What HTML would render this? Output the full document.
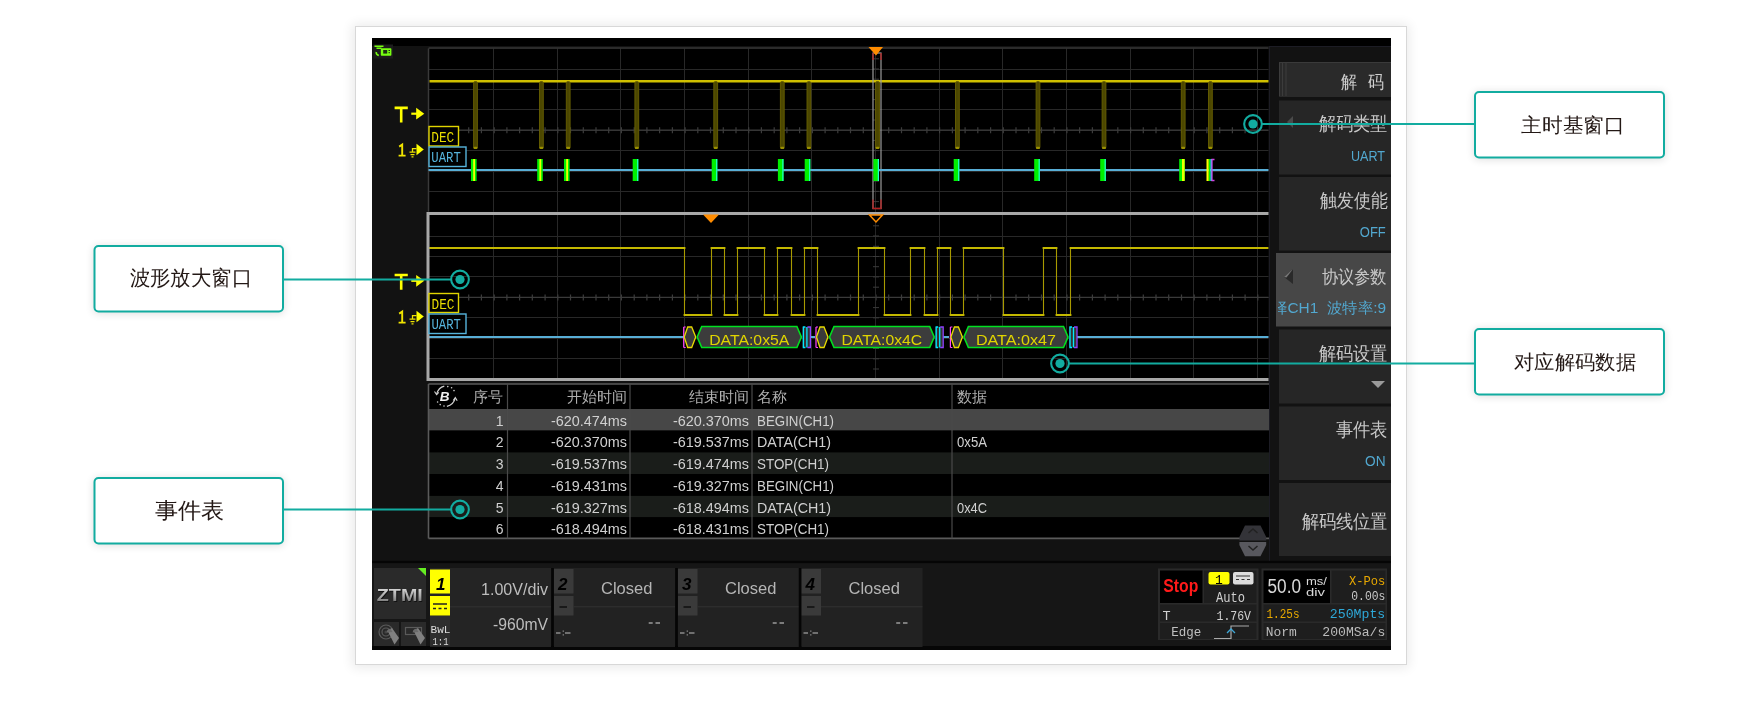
<!DOCTYPE html><html><head><meta charset="utf-8"><style>html,body{margin:0;padding:0;width:1760px;height:710px;overflow:hidden;background:#fff}</style></head><body><svg width="1760" height="710" viewBox="0 0 1760 710" style="position:absolute;left:0;top:0;will-change:transform;font-family:'Liberation Sans',sans-serif">
<defs><filter id="sh" x="-20%" y="-20%" width="140%" height="140%"><feGaussianBlur stdDeviation="6"/></filter><filter id="sh2" x="-10%" y="-10%" width="120%" height="120%"><feGaussianBlur stdDeviation="4"/></filter></defs>
<rect x="0" y="0" width="1760" height="710" fill="#ffffff"/>
<rect x="352" y="24" width="1057" height="644" fill="#000" opacity="0.08" filter="url(#sh)"/>
<rect x="355.5" y="26.5" width="1051" height="638" fill="#fff" stroke="#d8d8d8" stroke-width="1"/>
<rect x="372" y="38" width="1019" height="612" fill="#121212"/>
<rect x="372" y="38" width="1019" height="8" fill="#000"/>
<rect x="373.5" y="44.5" width="19.5" height="14" fill="#1c1c1c"/>
<path d="M374.5 46.2h9M376.5 48.2h5M376.3 52q-0.5 2.5 2.5 3.6" stroke="#77ff11" stroke-width="1.6" fill="none"/>
<rect x="380.8" y="48.2" width="10.6" height="7.6" rx="0.8" fill="#77ff11"/><rect x="383.2" y="50" width="4" height="3.6" fill="#1c3010"/><rect x="388.5" y="50" width="1.5" height="1" fill="#1c3010"/><rect x="388.5" y="52.2" width="1.5" height="1" fill="#1c3010"/>
<rect x="428.5" y="47.1" width="840.0" height="164.70000000000002" fill="#000"/>
<path d="M493.5 48.6V211.8 M557.5 48.6V211.8 M620.5 48.6V211.8 M684.5 48.6V211.8 M748.5 48.6V211.8 M811.5 48.6V211.8 M875.5 48.6V211.8 M939.5 48.6V211.8 M1002.5 48.6V211.8 M1066.5 48.6V211.8 M1130.5 48.6V211.8 M1193.5 48.6V211.8 M1257.5 48.6V211.8 M428.5 69.5H1268.5 M428.5 89.5H1268.5 M428.5 109.5H1268.5 M428.5 130.5H1268.5 M428.5 150.5H1268.5 M428.5 171.5H1268.5 M428.5 191.5H1268.5" stroke="#282828" stroke-width="1" fill="none"/>
<path d="M428.5 48.1H1268.5M428.5 48.6V211.8" stroke="#3a3a3a" stroke-width="1.5" fill="none"/>
<path d="M428.5 130.2H1268.5" stroke="#3a3a3a" stroke-width="1.3"/>
<path d="M456.0 127.20000000000002V133.20000000000002 M468.7 127.20000000000002V133.20000000000002 M481.4 127.20000000000002V133.20000000000002 M494.2 127.20000000000002V133.20000000000002 M506.9 127.20000000000002V133.20000000000002 M519.6 127.20000000000002V133.20000000000002 M532.3 127.20000000000002V133.20000000000002 M545.1 127.20000000000002V133.20000000000002 M557.8 127.20000000000002V133.20000000000002 M570.5 127.20000000000002V133.20000000000002 M583.3 127.20000000000002V133.20000000000002 M596.0 127.20000000000002V133.20000000000002 M608.7 127.20000000000002V133.20000000000002 M621.4 127.20000000000002V133.20000000000002 M634.2 127.20000000000002V133.20000000000002 M646.9 127.20000000000002V133.20000000000002 M659.6 127.20000000000002V133.20000000000002 M672.4 127.20000000000002V133.20000000000002 M685.1 127.20000000000002V133.20000000000002 M697.8 127.20000000000002V133.20000000000002 M710.5 127.20000000000002V133.20000000000002 M723.3 127.20000000000002V133.20000000000002 M736.0 127.20000000000002V133.20000000000002 M748.7 127.20000000000002V133.20000000000002 M761.4 127.20000000000002V133.20000000000002 M774.2 127.20000000000002V133.20000000000002 M786.9 127.20000000000002V133.20000000000002 M799.6 127.20000000000002V133.20000000000002 M812.4 127.20000000000002V133.20000000000002 M825.1 127.20000000000002V133.20000000000002 M837.8 127.20000000000002V133.20000000000002 M850.5 127.20000000000002V133.20000000000002 M863.3 127.20000000000002V133.20000000000002 M876.0 127.20000000000002V133.20000000000002 M888.7 127.20000000000002V133.20000000000002 M901.5 127.20000000000002V133.20000000000002 M914.2 127.20000000000002V133.20000000000002 M926.9 127.20000000000002V133.20000000000002 M939.6 127.20000000000002V133.20000000000002 M952.4 127.20000000000002V133.20000000000002 M965.1 127.20000000000002V133.20000000000002 M977.8 127.20000000000002V133.20000000000002 M990.6 127.20000000000002V133.20000000000002 M1003.3 127.20000000000002V133.20000000000002 M1016.0 127.20000000000002V133.20000000000002 M1028.7 127.20000000000002V133.20000000000002 M1041.5 127.20000000000002V133.20000000000002 M1054.2 127.20000000000002V133.20000000000002 M1066.9 127.20000000000002V133.20000000000002 M1079.6 127.20000000000002V133.20000000000002 M1092.4 127.20000000000002V133.20000000000002 M1105.1 127.20000000000002V133.20000000000002 M1117.8 127.20000000000002V133.20000000000002 M1130.6 127.20000000000002V133.20000000000002 M1143.3 127.20000000000002V133.20000000000002 M1156.0 127.20000000000002V133.20000000000002 M1168.7 127.20000000000002V133.20000000000002 M1181.5 127.20000000000002V133.20000000000002 M1194.2 127.20000000000002V133.20000000000002 M1206.9 127.20000000000002V133.20000000000002 M1219.7 127.20000000000002V133.20000000000002 M1232.4 127.20000000000002V133.20000000000002 M1245.1 127.20000000000002V133.20000000000002 M1257.8 127.20000000000002V133.20000000000002" stroke="#3c3c3c" stroke-width="1.2"/>
<path d="M875.5 48.6V211.8" stroke="#262626" stroke-width="1"/>
<path d="M873 58.8H879 M873 69.0H879 M873 79.2H879 M873 89.4H879 M873 99.6H879 M873 109.8H879 M873 120.0H879 M873 130.2H879 M873 140.4H879 M873 150.6H879 M873 160.8H879 M873 171.0H879 M873 181.2H879 M873 191.4H879 M873 201.6H879" stroke="#3a3a3a" stroke-width="1"/>
<path d="M429.5 81.2H1268.5" stroke="#d0c000" stroke-width="2.4"/>
<rect x="473.6" y="81.5" width="3.8" height="67" rx="1.5" fill="#4c4700" stroke="#686000" stroke-width="0.9"/>
<rect x="473.5" y="146.8" width="4" height="2.2" rx="1" fill="#9a9000"/>
<rect x="539.5" y="81.5" width="3.8" height="67" rx="1.5" fill="#4c4700" stroke="#686000" stroke-width="0.9"/>
<rect x="539.4" y="146.8" width="4" height="2.2" rx="1" fill="#9a9000"/>
<rect x="566.3" y="81.5" width="3.8" height="67" rx="1.5" fill="#4c4700" stroke="#686000" stroke-width="0.9"/>
<rect x="566.2" y="146.8" width="4" height="2.2" rx="1" fill="#9a9000"/>
<rect x="634.9" y="81.5" width="3.8" height="67" rx="1.5" fill="#4c4700" stroke="#686000" stroke-width="0.9"/>
<rect x="634.8" y="146.8" width="4" height="2.2" rx="1" fill="#9a9000"/>
<rect x="713.8" y="81.5" width="3.8" height="67" rx="1.5" fill="#4c4700" stroke="#686000" stroke-width="0.9"/>
<rect x="713.7" y="146.8" width="4" height="2.2" rx="1" fill="#9a9000"/>
<rect x="780.4" y="81.5" width="3.8" height="67" rx="1.5" fill="#4c4700" stroke="#686000" stroke-width="0.9"/>
<rect x="780.3" y="146.8" width="4" height="2.2" rx="1" fill="#9a9000"/>
<rect x="807.0" y="81.5" width="3.8" height="67" rx="1.5" fill="#4c4700" stroke="#686000" stroke-width="0.9"/>
<rect x="806.9" y="146.8" width="4" height="2.2" rx="1" fill="#9a9000"/>
<rect x="875.6" y="81.5" width="3.8" height="67" rx="1.5" fill="#4c4700" stroke="#686000" stroke-width="0.9"/>
<rect x="875.5" y="146.8" width="4" height="2.2" rx="1" fill="#9a9000"/>
<rect x="955.5" y="81.5" width="3.8" height="67" rx="1.5" fill="#4c4700" stroke="#686000" stroke-width="0.9"/>
<rect x="955.4" y="146.8" width="4" height="2.2" rx="1" fill="#9a9000"/>
<rect x="1036.1" y="81.5" width="3.8" height="67" rx="1.5" fill="#4c4700" stroke="#686000" stroke-width="0.9"/>
<rect x="1036.0" y="146.8" width="4" height="2.2" rx="1" fill="#9a9000"/>
<rect x="1102.1" y="81.5" width="3.8" height="67" rx="1.5" fill="#4c4700" stroke="#686000" stroke-width="0.9"/>
<rect x="1102.0" y="146.8" width="4" height="2.2" rx="1" fill="#9a9000"/>
<rect x="1181.3" y="81.5" width="3.8" height="67" rx="1.5" fill="#4c4700" stroke="#686000" stroke-width="0.9"/>
<rect x="1181.2" y="146.8" width="4" height="2.2" rx="1" fill="#9a9000"/>
<rect x="1208.5" y="81.5" width="3.8" height="67" rx="1.5" fill="#4c4700" stroke="#686000" stroke-width="0.9"/>
<rect x="1208.4" y="146.8" width="4" height="2.2" rx="1" fill="#9a9000"/>
<rect x="873" y="53" width="8" height="155.5" fill="none" stroke="#9a9a9a" stroke-width="1.2"/>
<path d="M873 53V60M881 53V60M873 199.5V208.5H881V199.5" stroke="#b22020" stroke-width="1.3" fill="none"/>
<path d="M868.5 47H883L876 55.5Z" fill="#ff8c00"/>
<path d="M428.5 170H1268.5" stroke="#58aed6" stroke-width="2"/>
<rect x="471.0" y="159" width="5.6" height="22" fill="#00f000"/>
<rect x="473.2" y="159" width="1.8" height="22" fill="#f0ff00"/>
<rect x="537.2" y="159" width="5.6" height="22" fill="#00f000"/>
<rect x="539.4" y="159" width="1.8" height="22" fill="#f0ff00"/>
<rect x="564.0" y="159" width="5.6" height="22" fill="#00f000"/>
<rect x="566.2" y="159" width="1.8" height="22" fill="#f0ff00"/>
<rect x="632.7" y="159" width="5.6" height="22" fill="#00f000"/>
<rect x="637.1" y="159" width="1.2" height="22" fill="#20ffd0"/>
<rect x="711.7" y="159" width="5.6" height="22" fill="#00f000"/>
<rect x="716.1" y="159" width="1.2" height="22" fill="#20ffd0"/>
<rect x="777.9" y="159" width="5.6" height="22" fill="#00f000"/>
<rect x="782.3" y="159" width="1.2" height="22" fill="#20ffd0"/>
<rect x="804.7" y="159" width="5.6" height="22" fill="#00f000"/>
<rect x="809.1" y="159" width="1.2" height="22" fill="#20ffd0"/>
<rect x="873.4" y="159" width="5.6" height="22" fill="#00f000"/>
<rect x="877.8" y="159" width="1.2" height="22" fill="#20ffd0"/>
<rect x="953.7" y="159" width="5.6" height="22" fill="#00f000"/>
<rect x="958.1" y="159" width="1.2" height="22" fill="#20ffd0"/>
<rect x="1034.2" y="159" width="5.6" height="22" fill="#00f000"/>
<rect x="1038.6" y="159" width="1.2" height="22" fill="#20ffd0"/>
<rect x="1100.2" y="159" width="5.6" height="22" fill="#00f000"/>
<rect x="1104.6" y="159" width="1.2" height="22" fill="#20ffd0"/>
<rect x="1179.2" y="159" width="5.6" height="22" fill="#00f000"/>
<rect x="1182.0" y="159" width="2.6" height="22" fill="#f0ff00"/>
<rect x="1206.5" y="159" width="2.3" height="22" fill="#ffff00"/><rect x="1208.8" y="159" width="1.6" height="22" fill="#00f000"/><rect x="1210.4" y="159" width="1.6" height="22" fill="#20e8ff"/><path d="M1214.5 159.5h-2.5v21h2.5" stroke="#d040e0" stroke-width="1.3" fill="none"/>
<rect x="429" y="126.5" width="29.5" height="19.5" fill="#000" stroke="#e0d400" stroke-width="1.4"/>
<text x="431.3" y="141.8" font-size="14" fill="#e8dc00" text-anchor="start" font-weight="normal" textLength="23" lengthAdjust="spacingAndGlyphs" font-family="Liberation Mono">DEC</text>
<rect x="429" y="147" width="37" height="19.5" fill="#000" stroke="#56b4dc" stroke-width="1.4"/>
<text x="431.3" y="162" font-size="14" fill="#56b4dc" text-anchor="start" font-weight="normal" textLength="29.5" lengthAdjust="spacingAndGlyphs" font-family="Liberation Mono">UART</text>
<path d="M394.6 107.89999999999999h13.2M401.2 107.89999999999999v14.7" stroke="#ffff00" stroke-width="2.6" fill="none"/>
<path d="M411.3 113.69999999999999h6" stroke="#ffff00" stroke-width="2.2"/><path d="M416.2 107.8L424.3 113.69999999999999L416.2 119.6Z" fill="#ffff00"/>
<path d="M399.2 146.6L402.2 144.6V155.6M398.6 155.6h7" stroke="#f0e400" stroke-width="1.9" fill="none"/>
<path d="M409.5 152.1h6M410.5 154.6h4M411.5 156.9h2M412.5 152.1v-3.5h4" stroke="#f0e400" stroke-width="1.3" fill="none"/>
<path d="M416.5 143.79999999999998L423.8 149.5L416.5 155.2Z" fill="#ffff00"/>
<rect x="428" y="213.5" width="840.5" height="166.0" fill="#000"/>
<path d="M493.5 213.5V379.5 M557.5 213.5V379.5 M620.5 213.5V379.5 M684.5 213.5V379.5 M748.5 213.5V379.5 M811.5 213.5V379.5 M875.5 213.5V379.5 M939.5 213.5V379.5 M1002.5 213.5V379.5 M1066.5 213.5V379.5 M1130.5 213.5V379.5 M1193.5 213.5V379.5 M1257.5 213.5V379.5 M428 236.5H1268.5 M428 256.5H1268.5 M428 276.5H1268.5 M428 297.5H1268.5 M428 317.5H1268.5 M428 338.5H1268.5 M428 358.5H1268.5" stroke="#282828" stroke-width="1" fill="none"/>
<path d="M428 297.4H1268.5" stroke="#3a3a3a" stroke-width="1.3"/>
<path d="M456.0 294.4V300.4 M468.7 294.4V300.4 M481.4 294.4V300.4 M494.2 294.4V300.4 M506.9 294.4V300.4 M519.6 294.4V300.4 M532.3 294.4V300.4 M545.1 294.4V300.4 M557.8 294.4V300.4 M570.5 294.4V300.4 M583.3 294.4V300.4 M596.0 294.4V300.4 M608.7 294.4V300.4 M621.4 294.4V300.4 M634.2 294.4V300.4 M646.9 294.4V300.4 M659.6 294.4V300.4 M672.4 294.4V300.4 M685.1 294.4V300.4 M697.8 294.4V300.4 M710.5 294.4V300.4 M723.3 294.4V300.4 M736.0 294.4V300.4 M748.7 294.4V300.4 M761.4 294.4V300.4 M774.2 294.4V300.4 M786.9 294.4V300.4 M799.6 294.4V300.4 M812.4 294.4V300.4 M825.1 294.4V300.4 M837.8 294.4V300.4 M850.5 294.4V300.4 M863.3 294.4V300.4 M876.0 294.4V300.4 M888.7 294.4V300.4 M901.5 294.4V300.4 M914.2 294.4V300.4 M926.9 294.4V300.4 M939.6 294.4V300.4 M952.4 294.4V300.4 M965.1 294.4V300.4 M977.8 294.4V300.4 M990.6 294.4V300.4 M1003.3 294.4V300.4 M1016.0 294.4V300.4 M1028.7 294.4V300.4 M1041.5 294.4V300.4 M1054.2 294.4V300.4 M1066.9 294.4V300.4 M1079.6 294.4V300.4 M1092.4 294.4V300.4 M1105.1 294.4V300.4 M1117.8 294.4V300.4 M1130.6 294.4V300.4 M1143.3 294.4V300.4 M1156.0 294.4V300.4 M1168.7 294.4V300.4 M1181.5 294.4V300.4 M1194.2 294.4V300.4 M1206.9 294.4V300.4 M1219.7 294.4V300.4 M1232.4 294.4V300.4 M1245.1 294.4V300.4 M1257.8 294.4V300.4" stroke="#3c3c3c" stroke-width="1.2"/>
<path d="M875.5 213.5V379.5" stroke="#262626" stroke-width="1"/>
<path d="M873 225.8H879 M873 236.0H879 M873 246.3H879 M873 256.5H879 M873 266.7H879 M873 276.9H879 M873 287.2H879 M873 297.4H879 M873 307.6H879 M873 317.8H879 M873 328.1H879 M873 338.3H879 M873 348.5H879 M873 358.8H879 M873 369.0H879" stroke="#3a3a3a" stroke-width="1"/>
<path d="M684.5 248V315 M711.5 248V315 M724.5 248V315 M737.5 248V315 M764.5 248V315 M777.5 248V315 M791.5 248V315 M804.5 248V315 M817.5 248V315 M858.5 248V315 M884.5 248V315 M910.5 248V315 M924.5 248V315 M937.5 248V315 M950.5 248V315 M963.5 248V315 M1003.5 248V315 M1043.5 248V315 M1056.5 248V315 M1070.5 248V315" stroke="#a89a00" stroke-width="1.1" fill="none"/>
<path d="M430 248H684.5 M684.5 315H711.5 M711.5 248H724.5 M724.5 315H737.5 M737.5 248H764.5 M764.5 315H777.5 M777.5 248H791.5 M791.5 315H804.5 M804.5 248H817.5 M817.5 315H858.5 M858.5 248H884.5 M884.5 315H910.5 M910.5 248H924.5 M924.5 315H937.5 M937.5 248H950.5 M950.5 315H963.5 M963.5 248H1003.5 M1003.5 315H1043.5 M1043.5 248H1056.5 M1056.5 315H1070.5 M1070.5 248H1267.5" stroke="#c4b800" stroke-width="1.8" fill="none" stroke-linecap="square"/>
<path d="M428 337H684M1077 337H1268.5" stroke="#58aed6" stroke-width="2"/>
<path d="M811 337H815M943 337H949" stroke="#58aed6" stroke-width="2"/>
<path d="M683.7 327H685.7M683.7 327V347.5M683.7 347.5H685.7" stroke="#ff44ff" stroke-width="1.2" fill="none"/>
<path d="M684.2 337L687.7 327H691.7L695.7 337L691.7 347.5H687.7Z" fill="#3a3a3a" stroke="#e8dc00" stroke-width="1.3"/>
<path d="M697.2 337L701.7 326.5H796.9L801.4 337L796.9 347.5H701.7Z" fill="#3c3c3c" stroke="#00e020" stroke-width="1.6"/>
<text x="749.3" y="345" font-size="15.5" fill="#e0d400" text-anchor="middle" font-weight="normal" textLength="80.2" lengthAdjust="spacingAndGlyphs" >DATA:0x5A</text>
<rect x="802.4" y="327" width="8" height="20.5" fill="#333"/>
<path d="M805.4 327H803.4V347.5H805.4M806.9 327V347.5" stroke="#00e8ff" stroke-width="1.3" fill="none"/>
<path d="M807.4 327H810.4V347.5H807.4" stroke="#9040ff" stroke-width="1.3" fill="none"/>
<path d="M816 327H818M816 327V347.5M816 347.5H818" stroke="#ff44ff" stroke-width="1.2" fill="none"/>
<path d="M816.5 337L820 327H824L828 337L824 347.5H820Z" fill="#3a3a3a" stroke="#e8dc00" stroke-width="1.3"/>
<path d="M829.5 337L834.0 326.5H929.7L934.2 337L929.7 347.5H834.0Z" fill="#3c3c3c" stroke="#00e020" stroke-width="1.6"/>
<text x="881.85" y="345" font-size="15.5" fill="#e0d400" text-anchor="middle" font-weight="normal" textLength="80.7" lengthAdjust="spacingAndGlyphs" >DATA:0x4C</text>
<rect x="935.2" y="327" width="8" height="20.5" fill="#333"/>
<path d="M938.2 327H936.2V347.5H938.2M939.7 327V347.5" stroke="#00e8ff" stroke-width="1.3" fill="none"/>
<path d="M940.2 327H943.2V347.5H940.2" stroke="#9040ff" stroke-width="1.3" fill="none"/>
<path d="M950.4 327H952.4M950.4 327V347.5M950.4 347.5H952.4" stroke="#ff44ff" stroke-width="1.2" fill="none"/>
<path d="M950.9 337L954.4 327H958.4L962.4 337L958.4 347.5H954.4Z" fill="#3a3a3a" stroke="#e8dc00" stroke-width="1.3"/>
<path d="M963.9 337L968.4 326.5H1063.5L1068 337L1063.5 347.5H968.4Z" fill="#3c3c3c" stroke="#00e020" stroke-width="1.6"/>
<text x="1015.95" y="345" font-size="15.5" fill="#e0d400" text-anchor="middle" font-weight="normal" textLength="80.1" lengthAdjust="spacingAndGlyphs" >DATA:0x47</text>
<rect x="1069" y="327" width="8" height="20.5" fill="#333"/>
<path d="M1072 327H1070V347.5H1072M1073.5 327V347.5" stroke="#00e8ff" stroke-width="1.3" fill="none"/>
<path d="M1074 327H1077V347.5H1074" stroke="#9040ff" stroke-width="1.3" fill="none"/>
<path d="M1268.5 213.5H428V379.5H1268.5" fill="none" stroke="#a8a8a8" stroke-width="3"/>
<path d="M703 214.5H719L711 223Z" fill="#ff8c00"/>
<path d="M869.5 215H882.5L876 222Z" fill="#000" stroke="#ff8c00" stroke-width="1.5"/>
<rect x="429" y="293.5" width="29.5" height="19" fill="#000" stroke="#e0d400" stroke-width="1.4"/>
<text x="431.5" y="308.7" font-size="14" fill="#e8dc00" text-anchor="start" font-weight="normal" textLength="23" lengthAdjust="spacingAndGlyphs" font-family="Liberation Mono">DEC</text>
<rect x="429" y="314" width="37" height="19.5" fill="#000" stroke="#56b4dc" stroke-width="1.4"/>
<text x="431.5" y="329" font-size="14" fill="#56b4dc" text-anchor="start" font-weight="normal" textLength="29.5" lengthAdjust="spacingAndGlyphs" font-family="Liberation Mono">UART</text>
<path d="M394.6 275.0h13.2M401.2 275.0v14.7" stroke="#ffff00" stroke-width="2.6" fill="none"/>
<path d="M411.3 280.8h6" stroke="#ffff00" stroke-width="2.2"/><path d="M416.2 274.9L424.3 280.8L416.2 286.7Z" fill="#ffff00"/>
<path d="M399.2 313.6L402.2 311.6V322.6M398.6 322.6h7" stroke="#f0e400" stroke-width="1.9" fill="none"/>
<path d="M409.5 319.1h6M410.5 321.6h4M411.5 323.90000000000003h2M412.5 319.1v-3.5h4" stroke="#f0e400" stroke-width="1.3" fill="none"/>
<path d="M416.5 310.8L423.8 316.5L416.5 322.20000000000005Z" fill="#ffff00"/>
<rect x="428.5" y="384" width="840.5" height="154.39999999999998" fill="#000"/>
<rect x="428.5" y="409" width="840.5" height="21.600000000000023" fill="#474747"/>
<rect x="428.5" y="430.6" width="840.5" height="21.799999999999955" fill="#000"/>
<rect x="428.5" y="452.4" width="840.5" height="21.80000000000001" fill="#1a1d1a"/>
<rect x="428.5" y="474.2" width="840.5" height="21.69999999999999" fill="#000"/>
<rect x="428.5" y="495.9" width="840.5" height="21.399999999999977" fill="#1a1d1a"/>
<rect x="428.5" y="517.3" width="840.5" height="21.100000000000023" fill="#000"/>
<path d="M428.5 384H1269M428.5 384V538.4M428.5 538.4H1269" stroke="#5a5a5a" stroke-width="1.6" fill="none"/>
<path d="M507.5 384V538.4 M630 384V538.4 M752 384V538.4 M952 384V538.4" stroke="#4a4a4a" stroke-width="1.2"/>
<text x="503" y="402" font-size="15" fill="#b0b0b0" text-anchor="end" font-weight="normal" >序号</text>
<text x="627" y="402" font-size="15" fill="#b0b0b0" text-anchor="end" font-weight="normal" >开始时间</text>
<text x="749" y="402" font-size="15" fill="#b0b0b0" text-anchor="end" font-weight="normal" >结束时间</text>
<text x="757" y="402" font-size="15" fill="#b0b0b0" text-anchor="start" font-weight="normal" >名称</text>
<text x="957" y="402" font-size="15" fill="#b0b0b0" text-anchor="start" font-weight="normal" >数据</text>
<path d="M444.3 386.2Q438.5 387.5 436.6 394.3M446.9 406.3Q453.5 405 455.2 398.2" stroke="#cfcfcf" stroke-width="1.3" fill="none"/>
<path d="M434.5 391.5L436.6 394.6L438.8 392.3M453.2 400.5L455.3 397.6L457.2 400.8" stroke="#cfcfcf" stroke-width="1.1" fill="none"/>
<g fill="#cfcfcf"><circle cx="447.8" cy="386.6" r="0.8"/><circle cx="451.6" cy="387.7" r="0.8"/><circle cx="454" cy="390.6" r="0.8"/><circle cx="437.6" cy="402" r="0.8"/><circle cx="440.2" cy="404.6" r="0.8"/><circle cx="444" cy="406" r="0.8"/></g>
<text x="439.8" y="401.3" font-size="13.5" fill="#f0f0f0" text-anchor="start" font-weight="bold" font-style="italic">B</text>
<text x="503.5" y="425.7" font-size="14" fill="#d0d0d0" text-anchor="end" font-weight="normal" >1</text>
<text x="627" y="425.7" font-size="14" fill="#d0d0d0" text-anchor="end" font-weight="normal" textLength="76" lengthAdjust="spacingAndGlyphs" >-620.474ms</text>
<text x="749" y="425.7" font-size="14" fill="#d0d0d0" text-anchor="end" font-weight="normal" textLength="76" lengthAdjust="spacingAndGlyphs" >-620.370ms</text>
<text x="757" y="425.7" font-size="14" fill="#d0d0d0" text-anchor="start" font-weight="normal" textLength="77" lengthAdjust="spacingAndGlyphs" >BEGIN(CH1)</text>
<text x="503.5" y="447.3" font-size="14" fill="#d0d0d0" text-anchor="end" font-weight="normal" >2</text>
<text x="627" y="447.3" font-size="14" fill="#d0d0d0" text-anchor="end" font-weight="normal" textLength="76" lengthAdjust="spacingAndGlyphs" >-620.370ms</text>
<text x="749" y="447.3" font-size="14" fill="#d0d0d0" text-anchor="end" font-weight="normal" textLength="76" lengthAdjust="spacingAndGlyphs" >-619.537ms</text>
<text x="757" y="447.3" font-size="14" fill="#d0d0d0" text-anchor="start" font-weight="normal" textLength="74" lengthAdjust="spacingAndGlyphs" >DATA(CH1)</text>
<text x="957" y="447.3" font-size="14" fill="#d0d0d0" text-anchor="start" font-weight="normal" textLength="30" lengthAdjust="spacingAndGlyphs" >0x5A</text>
<text x="503.5" y="469.09999999999997" font-size="14" fill="#d0d0d0" text-anchor="end" font-weight="normal" >3</text>
<text x="627" y="469.09999999999997" font-size="14" fill="#d0d0d0" text-anchor="end" font-weight="normal" textLength="76" lengthAdjust="spacingAndGlyphs" >-619.537ms</text>
<text x="749" y="469.09999999999997" font-size="14" fill="#d0d0d0" text-anchor="end" font-weight="normal" textLength="76" lengthAdjust="spacingAndGlyphs" >-619.474ms</text>
<text x="757" y="469.09999999999997" font-size="14" fill="#d0d0d0" text-anchor="start" font-weight="normal" textLength="72" lengthAdjust="spacingAndGlyphs" >STOP(CH1)</text>
<text x="503.5" y="490.9" font-size="14" fill="#d0d0d0" text-anchor="end" font-weight="normal" >4</text>
<text x="627" y="490.9" font-size="14" fill="#d0d0d0" text-anchor="end" font-weight="normal" textLength="76" lengthAdjust="spacingAndGlyphs" >-619.431ms</text>
<text x="749" y="490.9" font-size="14" fill="#d0d0d0" text-anchor="end" font-weight="normal" textLength="76" lengthAdjust="spacingAndGlyphs" >-619.327ms</text>
<text x="757" y="490.9" font-size="14" fill="#d0d0d0" text-anchor="start" font-weight="normal" textLength="77" lengthAdjust="spacingAndGlyphs" >BEGIN(CH1)</text>
<text x="503.5" y="512.6" font-size="14" fill="#d0d0d0" text-anchor="end" font-weight="normal" >5</text>
<text x="627" y="512.6" font-size="14" fill="#d0d0d0" text-anchor="end" font-weight="normal" textLength="76" lengthAdjust="spacingAndGlyphs" >-619.327ms</text>
<text x="749" y="512.6" font-size="14" fill="#d0d0d0" text-anchor="end" font-weight="normal" textLength="76" lengthAdjust="spacingAndGlyphs" >-618.494ms</text>
<text x="757" y="512.6" font-size="14" fill="#d0d0d0" text-anchor="start" font-weight="normal" textLength="74" lengthAdjust="spacingAndGlyphs" >DATA(CH1)</text>
<text x="957" y="512.6" font-size="14" fill="#d0d0d0" text-anchor="start" font-weight="normal" textLength="30" lengthAdjust="spacingAndGlyphs" >0x4C</text>
<text x="503.5" y="534.0" font-size="14" fill="#d0d0d0" text-anchor="end" font-weight="normal" >6</text>
<text x="627" y="534.0" font-size="14" fill="#d0d0d0" text-anchor="end" font-weight="normal" textLength="76" lengthAdjust="spacingAndGlyphs" >-618.494ms</text>
<text x="749" y="534.0" font-size="14" fill="#d0d0d0" text-anchor="end" font-weight="normal" textLength="76" lengthAdjust="spacingAndGlyphs" >-618.431ms</text>
<text x="757" y="534.0" font-size="14" fill="#d0d0d0" text-anchor="start" font-weight="normal" textLength="72" lengthAdjust="spacingAndGlyphs" >STOP(CH1)</text>
<path d="M1245 525.5H1260.5L1266.2 537V540.5H1239.4V537Z" fill="#333338"/>
<path d="M1239.4 542H1266.2V545L1260.5 556.3H1245L1239.4 545Z" fill="#58585e"/>
<path d="M1248.5 533l4.5 -4 4.5 4M1248.5 546l4.5 4 4.5 -4" stroke="#222" stroke-width="1.5" fill="none"/>
<rect x="1269" y="46" width="122" height="515" fill="#121212"/>
<path d="M1269.5 47V561M1269 46.5H1391" stroke="#1c1c24" stroke-width="1"/>
<rect x="1279" y="62" width="112" height="35" fill="#2a2a2a"/>
<path d="M1279.5 63V96M1282.5 63V96M1286 63V96" stroke="#3c3c3c" stroke-width="1"/>
<path d="M1279 62.5H1391" stroke="#3a3a3a" stroke-width="1"/>
<text transform="translate(1384.5,87.8) scale(1,1.12)" x="0" y="0" font-size="16.5" fill="#cfcfcf" text-anchor="end" font-weight="normal" >解&#160;&#160;码</text>
<rect x="1279" y="100.5" width="112" height="74.0" fill="#262626"/>
<path d="M1293 116L1287 122L1293 128Z" fill="#4a4a4a"/>
<text transform="translate(1387.5,130.2) scale(1,1.1)" x="0" y="0" font-size="17" fill="#c8c8c8" text-anchor="end" font-weight="normal" >解码类型</text>
<text x="1385" y="161" font-size="14" fill="#52a8d0" text-anchor="end" font-weight="normal" textLength="34" lengthAdjust="spacingAndGlyphs" >UART</text>
<rect x="1279" y="177" width="112" height="73.5" fill="#262626"/>
<text transform="translate(1387.5,206.6) scale(1,1.12)" x="0" y="0" font-size="17" fill="#c8c8c8" text-anchor="end" font-weight="normal" >触发使能</text>
<text x="1385.8" y="236.7" font-size="14" fill="#52a8d0" text-anchor="end" font-weight="normal" textLength="26" lengthAdjust="spacingAndGlyphs" >OFF</text>
<rect x="1276" y="253" width="115" height="73.5" fill="#474747"/>
<path d="M1293 269L1284 277L1293 284Z" fill="#2a2a2a"/><path d="M1293 269L1284 277L1286.5 277.5Z" fill="#777"/>
<text transform="translate(1386.5,283) scale(1,1.1)" x="0" y="0" font-size="16.6" fill="#c8c8c8" text-anchor="end" font-weight="normal" >协议参数</text>
<clipPath id="c4"><rect x="1278" y="253" width="113" height="73"/></clipPath><g clip-path="url(#c4)">
<text x="1272" y="313" font-size="15" fill="#52a8d0" text-anchor="start" font-weight="normal" textLength="114" lengthAdjust="spacingAndGlyphs" >择CH1&#160;&#160;波特率:9</text>
</g>
<rect x="1279" y="329.5" width="112" height="74.0" fill="#262626"/>
<text transform="translate(1387.5,359.5) scale(1,1.1)" x="0" y="0" font-size="17" fill="#c8c8c8" text-anchor="end" font-weight="normal" >解码设置</text>
<path d="M1371 381H1385L1378 388Z" fill="#9a9a9a"/>
<rect x="1279" y="406.5" width="112" height="73.5" fill="#262626"/>
<text transform="translate(1387.5,436) scale(1,1.1)" x="0" y="0" font-size="17" fill="#c8c8c8" text-anchor="end" font-weight="normal" >事件表</text>
<text x="1385.5" y="466" font-size="14" fill="#52a8d0" text-anchor="end" font-weight="normal" textLength="20.5" lengthAdjust="spacingAndGlyphs" >ON</text>
<rect x="1279" y="483" width="112" height="73" fill="#262626"/>
<text transform="translate(1387.5,527.7) scale(1,1.1)" x="0" y="0" font-size="17" fill="#c8c8c8" text-anchor="end" font-weight="normal" >解码线位置</text>
<rect x="372" y="560.8" width="1019" height="2.4" fill="#050505"/>
<rect x="372" y="563.2" width="1019" height="86.8" fill="#161616"/>
<rect x="372" y="646" width="1019" height="4" fill="#060606"/>
<rect x="374" y="568" width="52" height="51" fill="#2a2a2a"/>
<path d="M418 568H426V576Z" fill="#66ee22"/>
<linearGradient id="zg" x1="0" y1="0" x2="0" y2="1"><stop offset="0" stop-color="#e0e0e0"/><stop offset="0.55" stop-color="#a8a8a8"/><stop offset="1" stop-color="#6a6a6a"/></linearGradient>
<text x="377.6" y="601.6" font-size="16" fill="#111" text-anchor="start" font-weight="bold" textLength="46" lengthAdjust="spacingAndGlyphs" >ZTMI</text>
<text x="376.8" y="600.8" font-size="16" fill="url(#zg)" text-anchor="start" font-weight="bold" textLength="46" lengthAdjust="spacingAndGlyphs" >ZTMI</text>
<rect x="374" y="622" width="25" height="24" fill="#2a2a2a"/><rect x="401" y="622" width="25" height="24" fill="#2a2a2a"/>
<circle cx="386" cy="632" r="7" stroke="#5a5a5a" stroke-width="1.2" fill="none"/><circle cx="386" cy="632" r="4" stroke="#5a5a5a" stroke-width="1.2" fill="none"/><circle cx="386" cy="632" r="1.6" fill="#444"/>
<path d="M387.5 630.5L392 628L399 638L394.5 644.5Z" fill="#808080"/><path d="M386.6 632.6Q387 629 390.5 628.8L392.6 632Z" fill="#6a6a6a"/>
<rect x="405.5" y="627.5" width="16" height="7" stroke="#5a5a5a" stroke-width="1.2" fill="none"/>
<path d="M413.5 630.5L418 628L425 638L420.5 644.5Z" fill="#808080"/><path d="M412.6 632.6Q413 629 416.5 628.8L418.6 632Z" fill="#6a6a6a"/>
<rect x="430" y="568" width="121" height="79" fill="#242424"/>
<rect x="430" y="569.5" width="20" height="24" fill="#ffff00"/>
<text x="436" y="590" font-size="17" fill="#000" text-anchor="start" font-weight="bold" font-style="italic">1</text>
<rect x="430" y="596" width="20" height="19.5" fill="#ffff00"/>
<path d="M433 604h14M433 608.5h3M438.5 608.5h3M444 608.5h3" stroke="#222" stroke-width="1.5"/>
<rect x="430" y="616" width="20" height="30" fill="#2e2e2e"/>
<text x="430.5" y="633" font-size="11" fill="#ddd" text-anchor="start" font-weight="normal" textLength="20" lengthAdjust="spacingAndGlyphs" font-family="Liberation Mono">BwL</text>
<text x="432.5" y="644.5" font-size="11" fill="#ddd" text-anchor="start" font-weight="normal" textLength="16" lengthAdjust="spacingAndGlyphs" font-family="Liberation Mono">1:1</text>
<path d="M450 606.8H551" stroke="#333" stroke-width="1"/>
<text x="548" y="594.5" font-size="17" fill="#bdbdbd" text-anchor="end" font-weight="normal" textLength="67" lengthAdjust="spacingAndGlyphs" >1.00V/div</text>
<text x="548" y="629.5" font-size="17" fill="#bdbdbd" text-anchor="end" font-weight="normal" textLength="55" lengthAdjust="spacingAndGlyphs" >-960mV</text>
<rect x="554" y="568" width="121" height="79" fill="#222222"/>
<rect x="554" y="569" width="19.5" height="24.5" fill="#3a3a3a"/>
<text x="558" y="590" font-size="17" fill="#000" text-anchor="start" font-weight="bold" font-style="italic">2</text>
<rect x="554" y="596" width="19.5" height="19.5" fill="#3a3a3a"/>
<path d="M559.5 607H567" stroke="#111" stroke-width="1.6"/>
<path d="M573.5 606.8H675" stroke="#333" stroke-width="1"/>
<text x="626.7" y="594" font-size="17" fill="#b5b5b5" text-anchor="middle" font-weight="normal" textLength="51.5" lengthAdjust="spacingAndGlyphs" >Closed</text>
<path d="M648.7 623h4M655.5 623h4.5" stroke="#9a9a9a" stroke-width="1.4"/>
<path d="M556 633h4.5M565 633h5.5M563.3 630.5v1.3M563.3 634.3v1.3" stroke="#8a8a8a" stroke-width="1.3"/>
<rect x="678" y="568" width="121" height="79" fill="#222222"/>
<rect x="678" y="569" width="19.5" height="24.5" fill="#3a3a3a"/>
<text x="682" y="590" font-size="17" fill="#000" text-anchor="start" font-weight="bold" font-style="italic">3</text>
<rect x="678" y="596" width="19.5" height="19.5" fill="#3a3a3a"/>
<path d="M683.5 607H691" stroke="#111" stroke-width="1.6"/>
<path d="M697.5 606.8H799" stroke="#333" stroke-width="1"/>
<text x="750.7" y="594" font-size="17" fill="#b5b5b5" text-anchor="middle" font-weight="normal" textLength="51.5" lengthAdjust="spacingAndGlyphs" >Closed</text>
<path d="M772.7 623h4M779.5 623h4.5" stroke="#9a9a9a" stroke-width="1.4"/>
<path d="M680 633h4.5M689 633h5.5M687.3 630.5v1.3M687.3 634.3v1.3" stroke="#8a8a8a" stroke-width="1.3"/>
<rect x="801.5" y="568" width="121" height="79" fill="#222222"/>
<rect x="801.5" y="569" width="19.5" height="24.5" fill="#3a3a3a"/>
<text x="805.5" y="590" font-size="17" fill="#000" text-anchor="start" font-weight="bold" font-style="italic">4</text>
<rect x="801.5" y="596" width="19.5" height="19.5" fill="#3a3a3a"/>
<path d="M807.0 607H814.5" stroke="#111" stroke-width="1.6"/>
<path d="M821.0 606.8H922.5" stroke="#333" stroke-width="1"/>
<text x="874.2" y="594" font-size="17" fill="#b5b5b5" text-anchor="middle" font-weight="normal" textLength="51.5" lengthAdjust="spacingAndGlyphs" >Closed</text>
<path d="M896.2 623h4M903.0 623h4.5" stroke="#9a9a9a" stroke-width="1.4"/>
<path d="M803.5 633h4.5M812.5 633h5.5M810.8 630.5v1.3M810.8 634.3v1.3" stroke="#8a8a8a" stroke-width="1.3"/>
<path d="M552.5 568V647M676.5 568V647M800 568V647" stroke="#050505" stroke-width="2.5"/>
<rect x="1158" y="568.5" width="100.5" height="71.5" fill="#2a2a2a"/>
<rect x="1160" y="570.5" width="42.5" height="32.5" fill="#000"/>
<rect x="1204" y="570.5" width="52.5" height="32.5" fill="#1e1e1e"/>
<text x="1180.8" y="592.3" font-size="18" fill="#ff1a1a" text-anchor="middle" font-weight="bold" textLength="35" lengthAdjust="spacingAndGlyphs" >Stop</text>
<rect x="1208.5" y="572" width="21" height="12.5" rx="2" fill="#ffff00"/>
<text x="1219" y="583.5" font-size="13" fill="#000" text-anchor="middle" font-weight="normal" font-family="Liberation Mono">1</text>
<rect x="1233" y="572" width="20.5" height="12.5" rx="2" fill="#dddddd"/>
<path d="M1236 576h14M1236 579.5h3M1241.5 579.5h3M1247 579.5h3" stroke="#333" stroke-width="1.2"/>
<text x="1230.5" y="601.8" font-size="14" fill="#cfcfcf" text-anchor="middle" font-weight="normal" textLength="29" lengthAdjust="spacingAndGlyphs" font-family="Liberation Mono">Auto</text>
<rect x="1160" y="604.5" width="96.5" height="17" fill="#1e1e1e"/>
<text x="1162.5" y="619.6" font-size="13.5" fill="#cfcfcf" text-anchor="start" font-weight="normal" font-family="Liberation Mono">T</text>
<text x="1251" y="619.8" font-size="13.5" fill="#cfcfcf" text-anchor="end" font-weight="normal" textLength="34.5" lengthAdjust="spacingAndGlyphs" font-family="Liberation Mono">1.76V</text>
<rect x="1160" y="623" width="96.5" height="16" fill="#1e1e1e"/>
<text x="1171.3" y="636" font-size="13.5" fill="#c0c0c0" text-anchor="start" font-weight="normal" textLength="30" lengthAdjust="spacingAndGlyphs" font-family="Liberation Mono">Edge</text>
<path d="M1214 638.5H1231V626H1249" stroke="#aaa" stroke-width="1.2" fill="none"/><path d="M1227 633l4 -4 4 4" stroke="#3fa8d8" stroke-width="1.3" fill="none"/>
<rect x="1261.5" y="568.5" width="125.5" height="71.5" fill="#2a2a2a"/>
<rect x="1263.5" y="570.5" width="66.5" height="32.5" fill="#000"/>
<rect x="1331.5" y="570.5" width="54" height="32.5" fill="#1e1e1e"/>
<text x="1267.5" y="592.5" font-size="20" fill="#d8d8d8" text-anchor="start" font-weight="normal" textLength="33.5" lengthAdjust="spacingAndGlyphs" >50.0</text>
<text x="1306" y="584.5" font-size="11" fill="#d8d8d8" text-anchor="start" font-weight="normal" textLength="21" lengthAdjust="spacingAndGlyphs" >ms/</text>
<text x="1306" y="596" font-size="11" fill="#d8d8d8" text-anchor="start" font-weight="normal" textLength="19" lengthAdjust="spacingAndGlyphs" >div</text>
<text x="1385.2" y="585.3" font-size="12.5" fill="#e8a800" text-anchor="end" font-weight="normal" textLength="36.3" lengthAdjust="spacingAndGlyphs" font-family="Liberation Mono">X-Pos</text>
<text x="1385.3" y="600.3" font-size="13" fill="#c8c8c8" text-anchor="end" font-weight="normal" textLength="34" lengthAdjust="spacingAndGlyphs" font-family="Liberation Mono">0.00s</text>
<rect x="1263.5" y="604.5" width="122" height="17" fill="#1e1e1e"/>
<text x="1266.5" y="618.3" font-size="13.5" fill="#e8a800" text-anchor="start" font-weight="normal" textLength="33" lengthAdjust="spacingAndGlyphs" font-family="Liberation Mono">1.25s</text>
<text x="1385.3" y="618.3" font-size="13.5" fill="#2ea8d8" text-anchor="end" font-weight="normal" textLength="55.5" lengthAdjust="spacingAndGlyphs" font-family="Liberation Mono">250Mpts</text>
<rect x="1263.5" y="623" width="122" height="16" fill="#1e1e1e"/>
<text x="1265.8" y="636" font-size="13" fill="#bcbcbc" text-anchor="start" font-weight="normal" textLength="31" lengthAdjust="spacingAndGlyphs" font-family="Liberation Mono">Norm</text>
<text x="1385.3" y="636" font-size="13" fill="#bcbcbc" text-anchor="end" font-weight="normal" textLength="63" lengthAdjust="spacingAndGlyphs" font-family="Liberation Mono">200MSa/s</text>
<rect x="93.5" y="246" width="190.5" height="67.5" rx="4" fill="#000" opacity="0.13" filter="url(#sh2)"/>
<rect x="94.5" y="246" width="188.5" height="65.5" rx="4" fill="#fff" stroke="#12aca0" stroke-width="2"/>
<text x="129.5" y="284.8" font-size="20.6" fill="#231815" text-anchor="start" font-weight="normal" textLength="122.5" lengthAdjust="spacingAndGlyphs" >波形放大窗口</text>
<path d="M283 279.5H451" stroke="#12aca0" stroke-width="2"/>
<circle cx="460" cy="279.5" r="8.85" fill="none" stroke="#12aca0" stroke-width="2.1"/><circle cx="460" cy="279.5" r="4.6" fill="#12aca0"/>
<rect x="93.5" y="478" width="190.5" height="67.5" rx="4" fill="#000" opacity="0.13" filter="url(#sh2)"/>
<rect x="94.5" y="478" width="188.5" height="65.5" rx="4" fill="#fff" stroke="#12aca0" stroke-width="2"/>
<text x="155" y="518" font-size="21.5" fill="#231815" text-anchor="start" font-weight="normal" textLength="69.5" lengthAdjust="spacingAndGlyphs" >事件表</text>
<path d="M283 509.5H451" stroke="#12aca0" stroke-width="2"/>
<circle cx="460" cy="509.5" r="8.85" fill="none" stroke="#12aca0" stroke-width="2.1"/><circle cx="460" cy="509.5" r="4.6" fill="#12aca0"/>
<rect x="1474" y="92" width="191" height="67.5" rx="4" fill="#000" opacity="0.13" filter="url(#sh2)"/>
<rect x="1475" y="92" width="189" height="65.5" rx="4" fill="#fff" stroke="#12aca0" stroke-width="2"/>
<text x="1521.3" y="132.3" font-size="20.4" fill="#231815" text-anchor="start" font-weight="normal" textLength="103.5" lengthAdjust="spacingAndGlyphs" >主时基窗口</text>
<path d="M1262 124H1475" stroke="#12aca0" stroke-width="2"/>
<circle cx="1253" cy="124" r="8.85" fill="none" stroke="#12aca0" stroke-width="2.1"/><circle cx="1253" cy="124" r="4.6" fill="#12aca0"/>
<rect x="1474" y="329" width="191" height="67.5" rx="4" fill="#000" opacity="0.13" filter="url(#sh2)"/>
<rect x="1475" y="329" width="189" height="65.5" rx="4" fill="#fff" stroke="#12aca0" stroke-width="2"/>
<text x="1514" y="369" font-size="20.3" fill="#231815" text-anchor="start" font-weight="normal" textLength="122" lengthAdjust="spacingAndGlyphs" >对应解码数据</text>
<path d="M1069 363.5H1475" stroke="#12aca0" stroke-width="2"/>
<circle cx="1060" cy="363.5" r="8.85" fill="none" stroke="#12aca0" stroke-width="2.1"/><circle cx="1060" cy="363.5" r="4.6" fill="#12aca0"/>
</svg></body></html>
